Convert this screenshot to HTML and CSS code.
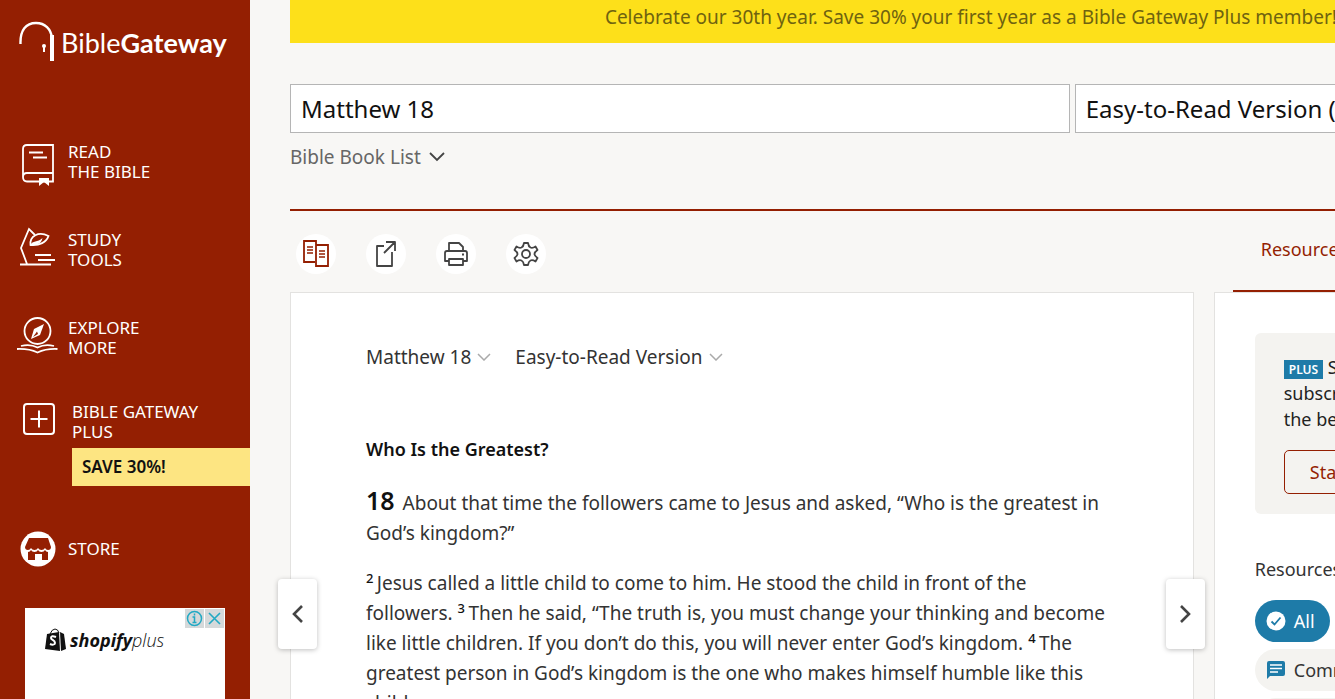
FILE: index.html
```html
<!DOCTYPE html>
<html lang="en">
<head>
    <meta charset="UTF-8">
    <meta name="viewport" content="width=device-width, initial-scale=1.0">
    <title>Matthew 18 ERV - Bible Gateway</title>
    <link rel="stylesheet" href="styles.css">
</head>
<body>
    <aside class="sidebar">
        <a class="logo" href="#">
            <svg width="36" height="42" viewBox="0 0 36 42" fill="none" stroke="#fff">
                <path d="M1.500 24C1 10 7 3 17 3c9 0 15 6 16 15" stroke-width="2.400"/>
                <path d="M33 15v26" stroke-width="4"/>
                <circle cx="25" cy="26" r="2" fill="#fff" stroke="none"/>
                <path d="M25 27v5" stroke-width="2"/>
            </svg>
            <span class="logo-text">Bible<b>Gateway</b></span>
        </a>

        <nav class="nav">
            <a class="nav-item" href="#">
                <svg class="nav-icon" width="42" height="44" viewBox="0 0 42 44" fill="none" stroke="#fff" stroke-width="1.800">
                    <path d="M35 36V5H9q-4 0-4 4v28q0 4.500 4 4.500h26V36M5 37q0-4 4-4h26"/>
                    <path d="M11 12.500h14M15 17.500h14"/>
                    <path d="M21 38h10v8l-5-4-5 4z" fill="#fff" stroke="none"/>
                </svg>
                <span>READ<br>THE BIBLE</span>
            </a>
            <a class="nav-item" href="#">
                <svg class="nav-icon" width="42" height="44" viewBox="0 0 42 44" fill="none" stroke="#fff" stroke-width="1.800">
                    <path d="M2 36.500h31M9 36L3 20l8-19 6 6M17 27h16M20 32h17"/>
                    <path d="M12.500 17c-1-9 8-14 18-9-2 6-9 10-18 9z"/>
                    <path d="M12.500 17c2-5 7-2 12-7-1 5-5 8-12 7z" fill="#fff" stroke="none"/>
                </svg>
                <span>STUDY<br>TOOLS</span>
            </a>
            <a class="nav-item" href="#">
                <svg class="nav-icon" width="42" height="44" viewBox="0 0 42 44" fill="none" stroke="#fff" stroke-width="1.800">
                    <circle cx="19.500" cy="15" r="13"/>
                    <path d="M26 8l-4 11-9 4 3-10z" fill="#fff" stroke="none"/>
                    <path d="M19 15.500l-4 5.500 5-3z" fill="#941f02" stroke="none"/>
                    <path d="M3 30q9-2.500 16.500 1.500Q27 27.500 36 30M-1 33q12-.5 20.500 3.500 8.500-4 20-3.500"/>
                </svg>
                <span>EXPLORE<br>MORE</span>
            </a>
            <a class="nav-item nav-plus" href="#">
                <svg class="nav-icon" width="42" height="44" viewBox="0 0 42 44" fill="none" stroke="#fff" stroke-width="2">
                    <rect x="6" y="4" width="30" height="30" rx="3"/>
                    <path d="M21 10.500v17M12.500 19h17"/>
                </svg>
                <span>BIBLE GATEWAY<br>PLUS</span>
            </a>
            <a class="save" href="#">SAVE 30%!</a>
            <a class="nav-item nav-store" href="#">
                <svg class="nav-icon" width="42" height="44" viewBox="0 0 42 44">
                    <circle cx="20" cy="22" r="17.500" fill="#fff"/>
                    <path d="M11 11h19l3 9q0 3-3 3-2 0-3-2-1 2-3.500 2T20 21q-1 2-3.500 2T13 21q-1 2-3 2-3 0-3-3z" fill="#941f02"/>
                    <path d="M10 25q2 0 3-2 1 2 3.500 2t3.500-2q1 2 3.500 2t3.500-2q1 2 3 2v8h-6v-6h-7v6h-7z" fill="#941f02"/>
                </svg>
                <span>STORE</span>
            </a>
        </nav>

        <div class="ad">
            <div class="ad-logo">
                <svg width="22" height="24" viewBox="0 0 22 24">
                    <path d="M2 6l12-2 1 19-15-2z" fill="#111"/>
                    <path d="M15 4l4 2 2 15-5 2z" fill="#111"/>
                    <path d="M5 6q2-5 5-5t4 4" fill="none" stroke="#111"/>
                    <path d="M11 9q-5-2-5 1c0 2 4 2 4 5 0 2-3 2-5 1" fill="none" stroke="#fff" stroke-width="2"/>
                </svg>
                <span><b>shopify</b>plus</span>
            </div>
            <div class="ad-choices">
                <button type="button" aria-label="Ad info">
                    <svg width="19" height="19" viewBox="0 0 19 19" fill="none" stroke="#21a9c4" stroke-width="1.500">
                        <circle cx="9.500" cy="9.500" r="7"/>
                        <path d="M7.500 8h2v5.500M7.500 13.500h4M9.500 4.500v2"/>
                    </svg>
                </button>
                <button type="button" aria-label="Close ad">
                    <svg width="19" height="19" viewBox="0 0 19 19" fill="none" stroke="#21a9c4" stroke-width="1.600">
                        <path d="M4 4l11 11M15 4L4 15"/>
                    </svg>
                </button>
            </div>
        </div>
    </aside>

    <main class="main">
        <a class="banner" href="#">Celebrate our 30th year. Save 30% your first year as a Bible Gateway Plus member!</a>

        <form class="search">
            <input class="search-passage" type="text" value="Matthew 18" aria-label="Passage">
            <select class="search-version" aria-label="Version">
                <option>Easy-to-Read Version (ERV)</option>
            </select>
        </form>
        <a class="book-list" href="#">Bible Book List
            <svg width="16" height="10" viewBox="0 0 16 10" fill="none" stroke="#444" stroke-width="1.800"><path d="M1 1l7 7 7-7"/></svg>
        </a>

        <div class="columns">
            <section class="passage">
                <div class="toolbar">
                    <button type="button" aria-label="Add parallel">
                        <svg width="28" height="30" viewBox="0 0 28 30" fill="none" stroke="#941f02" stroke-width="1.800">
                            <path d="M13 23H2V2h12v3M14 6h12v21H14z"/>
                            <path d="M5 8h6M5 11h6M5 14h6M17 12h6M17 15h6M17 18h6" stroke-width="1.400"/>
                        </svg>
                    </button>
                    <button type="button" aria-label="Share">
                        <svg width="28" height="30" viewBox="0 0 28 30" fill="none" stroke="#444" stroke-width="1.800" stroke-linejoin="round">
                            <path d="M12 7H5v20h15V13M12 14L23 3M14 3h9v9"/>
                        </svg>
                    </button>
                    <button type="button" aria-label="Print">
                        <svg width="28" height="30" viewBox="0 0 28 30" fill="none" stroke="#444" stroke-width="1.800" stroke-linejoin="round">
                            <path d="M7 12V4h10l4 4v4M7 22H3V14q0-2 2-2h18q2 0 2 2v8h-4"/>
                            <path d="M7 20h14v6H7z"/>
                            <path d="M20 15.500h2"/>
                        </svg>
                    </button>
                    <button type="button" aria-label="Settings">
                        <svg width="28" height="30" viewBox="0 0 28 30" fill="none" stroke="#444" stroke-width="1.800" stroke-linejoin="round">
                            <path d="M12 4h4q.5 3.500 2.500 4.500t5-1l2 3.500q-3 2-3 4t3 4l-2 3.500q-3-2-5-1T16 26h-4q-.5-3.500-2.500-4.500t-5 1L2.500 19q3-2 3-4t-3-4l2-3.500q3 2 5 1T12 4z"/>
                            <circle cx="14" cy="15" r="4"/>
                        </svg>
                    </button>
                </div>

                <article class="card">
                    <div class="pickers">
                        <button type="button">Matthew 18
                            <svg width="14" height="8" viewBox="0 0 14 8" fill="none" stroke="#aaa" stroke-width="1.500"><path d="M1 1l6 6 6-6"/></svg>
                        </button>
                        <button type="button">Easy-to-Read Version
                            <svg width="14" height="8" viewBox="0 0 14 8" fill="none" stroke="#aaa" stroke-width="1.500"><path d="M1 1l6 6 6-6"/></svg>
                        </button>
                    </div>
                    <h3>Who Is the Greatest?</h3>
                    <p><span class="chapter">18</span> About that time the followers came to Jesus and asked, “Who is the greatest in God’s kingdom?”</p>
                    <p><sup>2 </sup>Jesus called a little child to come to him. He stood the child in front of the followers. <sup>3 </sup>Then he said, “The truth is, you must change your thinking and become like little children. If you don’t do this, you will never enter God’s kingdom. <sup>4 </sup>The greatest person in God’s kingdom is the one who makes himself humble like this child.</p>
                </article>

                <button class="page-btn prev" type="button" aria-label="Previous chapter">
                    <svg width="12" height="20" viewBox="0 0 12 20" fill="none" stroke="#444" stroke-width="2.600"><path d="M10 2l-8 8 8 8"/></svg>
                </button>
                <button class="page-btn next" type="button" aria-label="Next chapter">
                    <svg width="12" height="20" viewBox="0 0 12 20" fill="none" stroke="#444" stroke-width="2.600"><path d="M2 2l8 8-8 8"/></svg>
                </button>
            </section>

            <aside class="resources">
                <div class="tabs">
                    <a class="tab" href="#">Resources</a>
                </div>
                <div class="panel">
                    <div class="promo">
                        <p><span class="plus-badge">PLUS</span> Start your<br>subscription and get<br>the best resources</p>
                        <button class="trial" type="button">Start your free trial</button>
                    </div>
                    <h4>Resources</h4>
                    <div class="filters">
                        <button class="filter active" type="button">
                            <svg width="20" height="20" viewBox="0 0 20 20"><circle cx="10" cy="10" r="9.500" fill="#fff"/><path d="M5.500 10.500l3 3 6-7" fill="none" stroke="#1e7ba8" stroke-width="1.800"/></svg>
                            All
                        </button>
                        <button class="filter" type="button">
                            <svg width="20" height="20" viewBox="0 0 20 20"><path d="M3 1h14q2 0 2 2v11q0 2-2 2H4l-3 3V3q0-2 2-2z" fill="#1e7ba8"/><path d="M4 5h12M4 8.500h12M4 12h8" stroke="#fff" stroke-width="1.500"/></svg>
                            Commentaries
                        </button>
                        <button class="filter" type="button">Dictionaries</button>
                    </div>
                </div>
            </aside>
        </div>
    </main>
</body>
</html>
```

FILE: styles.css
```css
* {
    margin: 0;
    padding: 0;
    box-sizing: border-box;
}

body {
    display: flex;
    height: 100vh;
    overflow: hidden;
    background-color: #f8f7f5;
    color: #333;
    font-family: "Segoe UI", "Noto Sans", sans-serif;
    font-size: 19px;
    line-height: 30px;
}

a {
    color: inherit;
    text-decoration: none;
}

button,
input,
select {
    font: inherit;
    color: inherit;
}

button {
    border: none;
    background: none;
    cursor: pointer;
}

/* sidebar */
.sidebar {
    flex: 0 0 250px;
    padding-top: 20px;
    background-color: #941f02;
    color: #fff;
}

.logo {
    display: flex;
    align-items: center;
    gap: 6px;
    padding-left: 19px;
}

.logo-text {
    padding-top: 3px;
    font-family: Lato, sans-serif;
    font-size: 27px;
    font-weight: 400;
}

.logo-text b {
    font-weight: 700;
}

.nav {
    display: flex;
    flex-direction: column;
    gap: 44px;
    padding-top: 78px;
}

.nav-item {
    display: flex;
    align-items: center;
    gap: 8px;
    height: 44px;
    padding-left: 18px;
    font-size: 17px;
    line-height: 20px;
}

.nav-icon {
    overflow: visible;
}

.nav-plus {
    gap: 12px;
    margin-top: -4px;
}

.save {
    margin: -40px 0 0 72px;
    padding-left: 10px;
    background-color: #fde582;
    color: #111;
    font-size: 17px;
    font-weight: 600;
    line-height: 38px;
}

.nav-store {
    margin-top: -3px;
}

.ad {
    display: flex;
    justify-content: space-between;
    align-items: flex-start;
    height: 200px;
    margin: 37px 25px 0;
    background-color: #fff;
    color: #111;
}

.ad-logo {
    display: flex;
    align-items: center;
    gap: 3px;
    padding: 17px 0 0 20px;
    font-family: "Open Sans", sans-serif;
    font-size: 18px;
    font-style: italic;
    font-weight: 300;
}

.ad-choices {
    display: flex;
    gap: 1px;
    padding: 1px;
}

.ad-choices button {
    width: 19px;
    height: 19px;
    background-color: #d5d9da;
}

.ad-logo b {
    font-weight: 700;
}

.ad svg,
.toolbar svg {
    display: block;
}

/* main area */
.main {
    flex: none;
    width: 105%;
    padding-left: 40px;
}

.banner {
    display: block;
    padding: 2px 0 11px;
    background-color: #fde01a;
    color: #6f6310;
    text-align: center;
}

.search {
    display: flex;
    gap: 5px;
    margin-top: 41px;
}

.search-passage,
.search-version {
    height: 49px;
    padding: 0 10px;
    border: 1px solid #b5b5b5;
    border-radius: 0;
    background-color: #fff;
    color: #111;
    font-size: 24px;
}

.search-passage {
    flex: 1;
}

.search-version {
    width: 577px;
    appearance: none;
}

.book-list {
    display: flex;
    align-items: center;
    gap: 8px;
    margin-top: 9px;
    color: #666;
}

.columns {
    display: flex;
    gap: 20px;
    margin-top: 37px;
    border-top: 2px solid #941f02;
}

.passage {
    position: relative;
    flex: 1;
}

.toolbar {
    display: flex;
    gap: 30px;
    padding: 23px 6px 18px;
}

.toolbar button {
    display: flex;
    align-items: center;
    justify-content: center;
    width: 40px;
    height: 40px;
    border-radius: 50%;
    background-color: #fff;
}

.card {
    padding: 49px 75px;
    border: 1px solid #e3e2e0;
    background-color: #fff;
}

.pickers {
    display: flex;
    gap: 24px;
}

.pickers button {
    display: flex;
    align-items: center;
    gap: 6px;
}

.card h3 {
    margin: 62px 0 24px;
    color: #111;
    font-size: 18px;
    font-weight: 600;
}

.card p {
    margin-bottom: 20px;
}

.chapter {
    margin-right: 3px;
    color: #111;
    font-size: 25px;
    font-weight: 600;
    line-height: 1;
}

.card sup {
    color: #111;
    font-size: 13px;
    font-weight: 500;
    line-height: 1;
}

.page-btn {
    position: absolute;
    top: 368px;
    display: flex;
    align-items: center;
    justify-content: center;
    width: 39px;
    height: 70px;
    border-radius: 4px;
    background-color: #fff;
    box-shadow: 0 1px 5px rgba(0, 0, 0, 0.25);
}

.prev {
    left: -12px;
}

.next {
    right: -11px;
}

/* resources */
.resources {
    display: flex;
    flex-direction: column;
    flex: 0 0 438px;
    font-size: 18px;
}

.tabs {
    display: flex;
    height: 81px;
    padding-left: 19px;
}

.tab {
    flex: 1;
    padding: 23px 28px 0;
    border-bottom: 2px solid #941f02;
    color: #941f02;
}

.panel {
    flex: 1;
    padding: 40px;
    border: 1px solid #e3e2e0;
    background-color: #fff;
}

.promo {
    padding: 21px 29px 20px;
    border-radius: 6px;
    background-color: #f4f3f0;
    color: #222;
    line-height: 26px;
}

.plus-badge {
    display: inline-block;
    padding: 0 5px;
    background-color: #1e7ba8;
    color: #fff;
    font-size: 12px;
    font-weight: 600;
    line-height: 19px;
    vertical-align: middle;
}

.trial {
    height: 44px;
    margin-top: 18px;
    padding: 0 25px;
    border: 1px solid #941f02;
    border-radius: 5px;
    color: #941f02;
}

.panel h4 {
    margin: 40px 0 16px;
    font-size: 18px;
    font-weight: 400;
}

.filters {
    display: flex;
    flex-direction: column;
    align-items: flex-start;
    gap: 7px;
}

.filter {
    display: flex;
    align-items: center;
    gap: 8px;
    height: 42px;
    padding: 0 15px 0 11px;
    border-radius: 21px;
    background-color: #f4f3f0;
}

.filter.active {
    background-color: #1e7ba8;
    color: #fff;
}
```
